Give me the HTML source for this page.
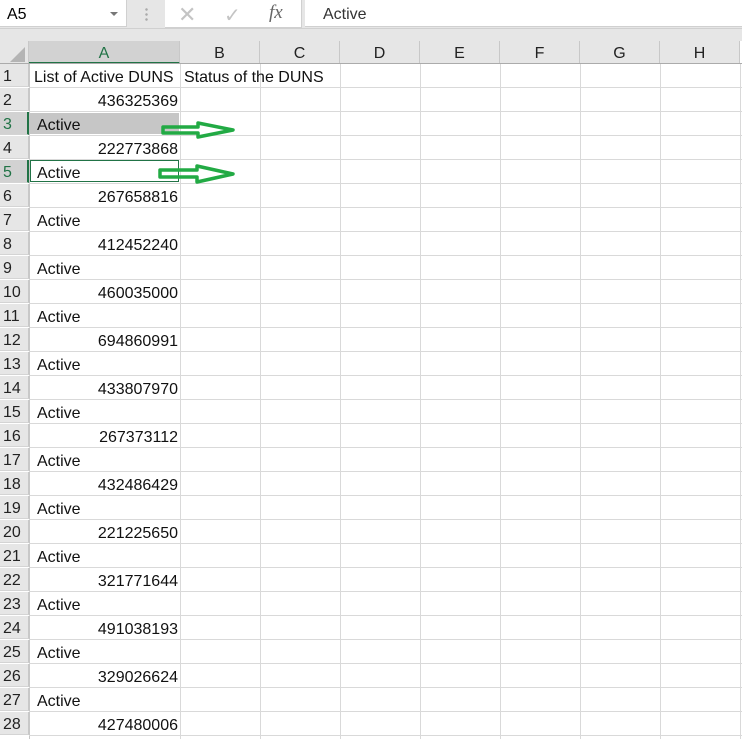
<!DOCTYPE html><html><head><style>
body{margin:0;width:742px;height:739px;background:#fff;position:relative;overflow:hidden;font-family:"Liberation Sans",sans-serif;}
.a{position:absolute;}
.rh{position:absolute;left:0;width:29px;height:23px;background:#e6e6e6;border-bottom:1px solid #d4d4d4;font-size:16px;line-height:26px;padding-left:3px;box-sizing:border-box;color:#222}
.ch{position:absolute;top:41px;height:23px;background:#e6e6e6;border-right:1px solid #c8c8c8;text-align:center;font-size:16px;line-height:25px;color:#222;box-sizing:border-box}
.hl{position:absolute;left:29px;width:713px;height:1px;background:#d9d9d9}
.vl{position:absolute;top:64px;width:1px;height:675px;background:#d9d9d9}
.c{position:absolute;font-size:16px;line-height:26px;color:#111}
</style></head><body>
<div class="a" style="left:0;top:0;width:742px;height:41px;background:#e6e6e6"></div>
<div class="a" style="left:0;top:0;width:127px;height:27px;background:#fff;border-right:1px solid #d0d0d0;border-bottom:1px solid #d0d0d0;font-size:16px;line-height:29px;padding-left:7px;box-sizing:border-box">A5</div>
<div class="a" style="left:110px;top:12px;width:0;height:0;border-left:4px solid transparent;border-right:4px solid transparent;border-top:4px solid #777"></div>
<div class="a" style="left:145px;top:7px;width:3px;height:14px;background:radial-gradient(circle,#aaa 1px,transparent 1.5px) 0 0/3px 5px"></div>
<div class="a" style="left:165px;top:0;width:136px;height:27px;background:#fff;border-right:1px solid #d0d0d0;border-bottom:1px solid #d0d0d0"></div>
<div class="a" style="left:178px;top:2px;font-size:22px;color:#c4c4c4">✕</div>
<div class="a" style="left:224px;top:3px;font-size:20px;color:#c4c4c4">✓</div>
<div class="a" style="left:269px;top:2px;font-size:19px;font-style:italic;font-family:'Liberation Serif',serif;color:#666">fx</div>
<div class="a" style="left:305px;top:0;width:437px;height:27px;background:#fff;border-bottom:1px solid #d0d0d0;font-size:16px;line-height:29px;padding-left:18px;box-sizing:border-box;color:#333">Active</div>
<div class="a" style="left:0;top:28px;width:742px;height:1px;background:#d0d0d0"></div>
<div class="a" style="left:0;top:41px;width:29px;height:23px;background:#e6e6e6;border-right:1px solid #c8c8c8;box-sizing:border-box"></div>
<div class="a" style="left:10px;top:47px;width:0;height:0;border-left:15px solid transparent;border-bottom:15px solid #b4b4b4"></div>
<div class="ch" style="left:29px;width:151px;background:#d2d2d2;color:#217346;border-bottom:2px solid #217346">A</div>
<div class="ch" style="left:180px;width:80px">B</div>
<div class="ch" style="left:260px;width:80px">C</div>
<div class="ch" style="left:340px;width:80px">D</div>
<div class="ch" style="left:420px;width:80px">E</div>
<div class="ch" style="left:500px;width:80px">F</div>
<div class="ch" style="left:580px;width:80px">G</div>
<div class="ch" style="left:660px;width:80px">H</div>
<div class="a" style="left:0;top:63px;width:742px;height:1px;background:#ababab"></div>
<div class="vl" style="left:180px"></div><div class="vl" style="left:260px"></div><div class="vl" style="left:340px"></div><div class="vl" style="left:420px"></div><div class="vl" style="left:500px"></div><div class="vl" style="left:580px"></div><div class="vl" style="left:660px"></div><div class="vl" style="left:740px"></div>
<div class="a" style="left:29px;top:64px;width:1px;height:675px;background:#c8c8c8"></div>
<div id="rows"></div>
<script>
var vals=["List of Active DUNS","436325369","Active","222773868","Active","267658816","Active","412452240","Active","460035000","Active","694860991","Active","433807970","Active","267373112","Active","432486429","Active","221225650","Active","321771644","Active","491038193","Active","329026624","Active","427480006"];
var h="";
for(var i=0;i<28;i++){var t=64+i*24;var sel=(i==2||i==4);
h+='<div class="rh" style="top:'+t+'px;'+(sel?'background:#d2d2d2;color:#217346;border-right:2px solid #217346':'border-right:1px solid #c8c8c8')+'">'+(i+1)+'</div>';
h+='<div class="hl" style="top:'+(t+23)+'px"></div>';
var v=vals[i];var num=/^\d/.test(v);
if(i==2)h+='<div class="a" style="left:30px;top:'+(t+1)+'px;width:149px;height:21px;background:#c6c6c6"></div>';
h+='<div class="c" style="top:'+(t+1)+'px;'+(num?'left:30px;width:148px;text-align:right':'left:'+(i==0?34:37)+'px')+'">'+v+'</div>';}
h+='<div class="c" style="top:65px;left:184px">Status of the DUNS</div>';
h+='<div class="a" style="left:30px;top:160px;width:149px;height:22px;border:1px solid #217346;box-sizing:border-box"></div>';
document.getElementById("rows").innerHTML=h;
</script>
<svg class="a" style="left:0;top:0" width="742" height="739">
<g fill="none" stroke="#22aa44" stroke-width="3.5" stroke-linejoin="round">
<path d="M163 127 L198 127 L198 123 L233 130 L198 137 L198 133 L163 133 Z"/>
<path d="M160 170 L197 170 L197 166 L233 174 L197 182 L197 177 L160 177 Z"/>
</g></svg>
</body></html>
